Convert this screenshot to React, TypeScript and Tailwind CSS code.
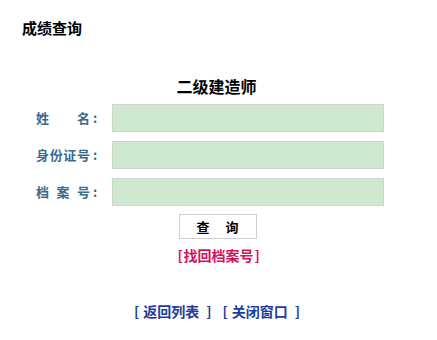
import React from "react";

const font = { fontFamily: '"Noto Sans CJK SC", "Noto Sans", sans-serif' };

function Label({ parts }: { parts: string[] }) {
  return (
    <div className="flex w-[64px] items-center text-[13px] font-bold leading-[16px] text-[#3a6a8c]">
      <div className="flex w-[54px] justify-between">
        {parts.map((p, i) => (
          <span key={i}>{p}</span>
        ))}
      </div>
      <span className="ml-[3px]">:</span>
    </div>
  );
}

function Row({ parts }: { parts: string[] }) {
  return (
    <div className="flex h-[28px] items-center pl-[36px]">
      <Label parts={parts} />
      <div className="ml-[12px] h-[28px] w-[272px] border border-[#cfd6cf] bg-[#cfe8d0]" />
    </div>
  );
}

export default function App() {
  return (
    <div className="h-[340px] w-[437px] bg-white" style={font}>
      <div className="pl-[22px] pt-[18px] text-[15px] font-bold leading-[20px] text-black">成绩查询</div>
      <div className="mt-[38px] text-center text-[16px] font-bold leading-[20px] text-black">
        <span className="inline-block pr-[4px]">二级建造师</span>
      </div>
      <div className="mt-[8px] flex flex-col gap-[9px]">
        <Row parts={["姓", "名"]} />
        <Row parts={["身", "份", "证", "号"]} />
        <Row parts={["档", "案", "号"]} />
      </div>
      <div className="mt-[8px] flex justify-center pr-[2px]">
        <div className="flex h-[25px] w-[78px] items-center justify-center gap-[16px] border border-[#d0d0d0] bg-white text-[13px] font-bold text-black">
          <span>查</span>
          <span>询</span>
        </div>
      </div>
      <div className="mt-[8px] flex justify-center pr-[1px] text-[14px] font-bold leading-[16px] text-[#d4145a]">
        <span className="inline-block w-[5px]">[</span>
        <span className="pl-[1px]">找回档案号</span>
        <span className="inline-block w-[5px] pl-[1px]">]</span>
      </div>
      <div className="mt-[40px] flex justify-center gap-[11px] pr-[3px] text-[14px] font-bold leading-[16px] text-[#1e3c9e]">
        <div className="flex">
          <span className="mr-[4px]">[</span>
          <span>返回列表</span>
          <span className="ml-[7px]">]</span>
        </div>
        <div className="flex">
          <span className="mr-[4px]">[</span>
          <span>关闭窗口</span>
          <span className="ml-[7px]">]</span>
        </div>
      </div>
    </div>
  );
}
